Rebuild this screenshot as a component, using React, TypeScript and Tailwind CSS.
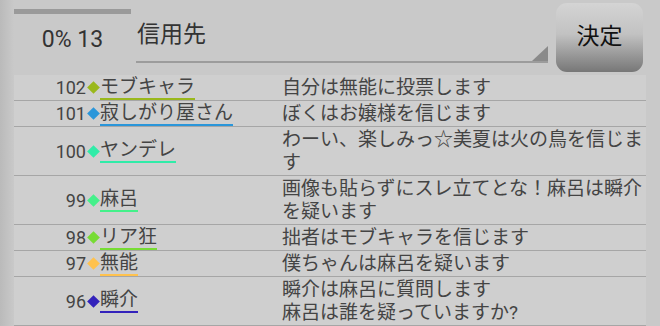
const rows = [
  { no: 102, name: "モブキャラ", color: "#9ab81c", msg: "自分は無能に投票します" },
  { no: 101, name: "寂しがり屋さん", color: "#2a96da", msg: "ぼくはお嬢様を信じます" },
  { no: 100, name: "ヤンデレ", color: "#30eca8", msg: "わーい、楽しみっ☆美夏は火の鳥を信じます" },
  { no: 99, name: "麻呂", color: "#44f08a", msg: "画像も貼らずにスレ立てとな！麻呂は瞬介を疑います" },
  { no: 98, name: "リア狂", color: "#77dc34", msg: "拙者はモブキャラを信じます" },
  { no: 97, name: "無能", color: "#ffc24e", msg: "僕ちゃんは麻呂を疑います" },
  { no: 96, name: "瞬介", color: "#3322bb", msg: "瞬介は麻呂に質問します\n麻呂は誰を疑っていますか?" },
];

export default function App() {
  return (
    <div
      className="w-[660px] h-[326px] overflow-hidden bg-[linear-gradient(to_right,#bababa,#c9c9c9_14px)] text-[#444]"
      style={{ fontFamily: 'Roboto, "Noto Sans CJK JP", sans-serif' }}
    >
      {/* header */}
      <div className="flex h-[75px]">
        <div className="ml-[14px] w-[117px] flex flex-col items-center">
          <div className="mt-[9px] h-[5px] w-full bg-[#9a9a9a]" />
          <div className="mt-[11px] text-[23px] leading-[30px] text-[#333]">0% 13</div>
        </div>
        <div className="ml-[5px] w-[412px] h-[63px] relative border-b-2 border-[#9c9c9c]">
          <div className="pt-[20px] pl-[1px] text-[23px] leading-[30px] text-[#333]">信用先</div>
          <div className="absolute right-0 bottom-0 w-0 h-0 border-l-[16px] border-l-transparent border-b-[15px] border-b-[#8a8a8a]" />
        </div>
        <button className="ml-[8px] mt-[3px] w-[87px] h-[69px] rounded-[11px] bg-[linear-gradient(to_bottom,#d4d4d4_0%,#c2c2c2_45%,#777_100%)] text-[23px] text-[#111]">
          決定
        </button>
      </div>

      {/* list */}
      <div className="ml-[14px] w-[632px] bg-[#cfcfcf]">
        {rows.map((r) => (
          <div key={r.no} className="flex border-b border-[#a6a6a6] text-[19px]">
            <div className="w-[268px] flex items-center shrink-0">
              <div className="w-[72px] text-right text-[18px] leading-[21px]">{r.no}</div>
              <div className="w-[14px] flex justify-center">
                <div className="w-[9px] h-[9px] rotate-45" style={{ backgroundColor: r.color }} />
              </div>
              <div className="border-b-2 leading-[22px]" style={{ borderColor: r.color }}>
                {r.name}
              </div>
            </div>
            <div className="flex-1 py-[1px] leading-[23px] whitespace-pre-line">{r.msg}</div>
          </div>
        ))}
      </div>
    </div>
  );
}
